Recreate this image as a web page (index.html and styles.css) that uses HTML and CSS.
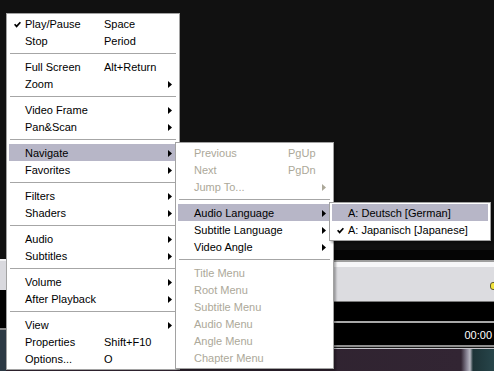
FILE: index.html
```html
<!DOCTYPE html>
<html>
<head>
<meta charset="utf-8">
<link rel="stylesheet" href="styles.css">
</head>
<body>
<div class="desk">
  <div class="lcol">
    <div class="l-dark"></div>
    <div class="l-white"></div>
    <div class="l-gray"></div>
    <div class="l-black"></div>
    <div class="l-line"></div>
    <div class="l-img"></div>
  </div>
  <div class="rcol">
    <div class="r-dark"></div>
    <div class="r-black"></div>
    <div class="r-line"></div>
    <div class="r-white"></div>
    <div class="r-toolbar"><span class="ydot"></span></div>
    <div class="r-line2"></div>
    <div class="r-seek"></div>
    <div class="r-line3"></div>
    <div class="r-status"><span class="time">00:00</span></div>
    <div class="r-line4"></div>
    <div class="r-line5"></div>
    <div class="r-line6"></div>
    <div class="r-img"></div>
  </div>
</div>

<div class="menu main">
  <div class="item"><span class="gut"><svg class="chk" width="7" height="7" viewBox="0 0 7 7"><path d="M0.6 3.2 L2.6 5.4 L6.4 1.2"/></svg></span><span class="lbl">Play/Pause</span><span class="key">Space</span></div>
  <div class="item"><span class="gut"></span><span class="lbl">Stop</span><span class="key">Period</span></div>
  <div class="sep"></div>
  <div class="item"><span class="gut"></span><span class="lbl">Full Screen</span><span class="key">Alt+Return</span></div>
  <div class="item"><span class="gut"></span><span class="lbl">Zoom</span><svg class="arr" width="4" height="7" viewBox="0 0 4 7"><path d="M0 0L4 3.5L0 7Z"/></svg></div>
  <div class="sep"></div>
  <div class="item"><span class="gut"></span><span class="lbl">Video Frame</span><svg class="arr" width="4" height="7" viewBox="0 0 4 7"><path d="M0 0L4 3.5L0 7Z"/></svg></div>
  <div class="item"><span class="gut"></span><span class="lbl">Pan&amp;Scan</span><svg class="arr" width="4" height="7" viewBox="0 0 4 7"><path d="M0 0L4 3.5L0 7Z"/></svg></div>
  <div class="sep"></div>
  <div class="item sel"><span class="gut"></span><span class="lbl">Navigate</span><svg class="arr" width="4" height="7" viewBox="0 0 4 7"><path d="M0 0L4 3.5L0 7Z"/></svg></div>
  <div class="item"><span class="gut"></span><span class="lbl">Favorites</span><svg class="arr" width="4" height="7" viewBox="0 0 4 7"><path d="M0 0L4 3.5L0 7Z"/></svg></div>
  <div class="sep"></div>
  <div class="item"><span class="gut"></span><span class="lbl">Filters</span><svg class="arr" width="4" height="7" viewBox="0 0 4 7"><path d="M0 0L4 3.5L0 7Z"/></svg></div>
  <div class="item"><span class="gut"></span><span class="lbl">Shaders</span><svg class="arr" width="4" height="7" viewBox="0 0 4 7"><path d="M0 0L4 3.5L0 7Z"/></svg></div>
  <div class="sep"></div>
  <div class="item"><span class="gut"></span><span class="lbl">Audio</span><svg class="arr" width="4" height="7" viewBox="0 0 4 7"><path d="M0 0L4 3.5L0 7Z"/></svg></div>
  <div class="item"><span class="gut"></span><span class="lbl">Subtitles</span><svg class="arr" width="4" height="7" viewBox="0 0 4 7"><path d="M0 0L4 3.5L0 7Z"/></svg></div>
  <div class="sep"></div>
  <div class="item"><span class="gut"></span><span class="lbl">Volume</span><svg class="arr" width="4" height="7" viewBox="0 0 4 7"><path d="M0 0L4 3.5L0 7Z"/></svg></div>
  <div class="item"><span class="gut"></span><span class="lbl">After Playback</span><svg class="arr" width="4" height="7" viewBox="0 0 4 7"><path d="M0 0L4 3.5L0 7Z"/></svg></div>
  <div class="sep"></div>
  <div class="item"><span class="gut"></span><span class="lbl">View</span><svg class="arr" width="4" height="7" viewBox="0 0 4 7"><path d="M0 0L4 3.5L0 7Z"/></svg></div>
  <div class="item"><span class="gut"></span><span class="lbl">Properties</span><span class="key">Shift+F10</span></div>
  <div class="item"><span class="gut"></span><span class="lbl">Options...</span><span class="key">O</span></div>
</div>

<div class="menu sub">
  <div class="item dis"><span class="gut"></span><span class="lbl">Previous</span><span class="key">PgUp</span></div>
  <div class="item dis"><span class="gut"></span><span class="lbl">Next</span><span class="key">PgDn</span></div>
  <div class="item dis"><span class="gut"></span><span class="lbl">Jump To...</span><svg class="arr" width="4" height="7" viewBox="0 0 4 7"><path d="M0 0L4 3.5L0 7Z"/></svg></div>
  <div class="sep"></div>
  <div class="item sel"><span class="gut"></span><span class="lbl">Audio Language</span><svg class="arr" width="4" height="7" viewBox="0 0 4 7"><path d="M0 0L4 3.5L0 7Z"/></svg></div>
  <div class="item"><span class="gut"></span><span class="lbl">Subtitle Language</span><svg class="arr" width="4" height="7" viewBox="0 0 4 7"><path d="M0 0L4 3.5L0 7Z"/></svg></div>
  <div class="item"><span class="gut"></span><span class="lbl">Video Angle</span><svg class="arr" width="4" height="7" viewBox="0 0 4 7"><path d="M0 0L4 3.5L0 7Z"/></svg></div>
  <div class="sep"></div>
  <div class="item dis"><span class="gut"></span><span class="lbl">Title Menu</span></div>
  <div class="item dis"><span class="gut"></span><span class="lbl">Root Menu</span></div>
  <div class="item dis"><span class="gut"></span><span class="lbl">Subtitle Menu</span></div>
  <div class="item dis"><span class="gut"></span><span class="lbl">Audio Menu</span></div>
  <div class="item dis"><span class="gut"></span><span class="lbl">Angle Menu</span></div>
  <div class="item dis"><span class="gut"></span><span class="lbl">Chapter Menu</span></div>
</div>

<div class="menu subsub">
  <div class="item sel"><span class="gut"></span><span class="lbl">A: Deutsch [German]</span></div>
  <div class="item"><span class="gut"><svg class="chk" width="7" height="7" viewBox="0 0 7 7"><path d="M0.6 3.2 L2.6 5.4 L6.4 1.2"/></svg></span><span class="lbl">A: Japanisch [Japanese]</span></div>
</div>
</body>
</html>
```
FILE: styles.css
```css
html, body {
  margin: 0;
  padding: 0;
  width: 494px;
  height: 371px;
  overflow: hidden;
  background: #111111;
  font-family: "Liberation Sans", Arial, sans-serif;
}

.desk {
  display: flex;
  width: 494px;
  height: 371px;
}

.lcol {
  width: 6px;
  display: flex;
  flex-direction: column;
}
.l-dark { height: 259px; background: #111111; }
.l-white { height: 2px; background: #f2f2f4; }
.l-gray { height: 29px; background: #d9d9de; }
.l-black { height: 38px; background: #020202; }
.l-line { height: 2px; background: #8a8a8a; }
.l-img { flex: 1; background: #2c3944; }

.rcol {
  flex: 1;
  display: flex;
  flex-direction: column;
}
.r-dark { height: 250px; background: #111111; }
.r-black { height: 10px; background: #050505; }
.r-line { height: 2px; background: #9e9e9e; }
.r-white { height: 5px; background: #f6f6f8; }
.r-toolbar {
  height: 34px;
  background: #dcdce0;
  display: flex;
  justify-content: flex-end;
  align-items: flex-start;
  padding-top: 15px;
  box-sizing: border-box;
  overflow: hidden;
}
.ydot {
  width: 7px;
  height: 6px;
  border-radius: 3px;
  background: #f2e33a;
  border: 1px solid #5e5a30;
  margin-right: -5px;
}
.r-line2 { height: 1px; background: #7a7a7a; }
.r-seek { height: 19px; background: #000000; }
.r-line3 { height: 2px; background: #a8a8a8; }
.r-status {
  height: 22px;
  background: #000000;
  display: flex;
  justify-content: flex-end;
  align-items: center;
}
.time {
  color: #ffffff;
  font-size: 11px;
  line-height: 22px;
  padding-right: 2px;
  padding-top: 1px;
}
.r-line4 { height: 2px; background: #8e8e8e; }
.r-line5 { height: 1px; background: #1a1a1a; }
.r-line6 { height: 1px; background: #c6c6cc; }
.r-img {
  flex: 1;
  background: linear-gradient(to right, #2b202b 0, #322533 455px, #8c8898 461px, #b8b8c2 464px, #1d3337 467px, #27454a 488px);
}

/* menus */
.menu {
  position: absolute;
  background: #ffffff;
  border: 1px solid #a2a2a2;
  padding: 1px 2px 2px 2px;
  box-sizing: border-box;
  font-size: 11px;
  color: #000000;
}
.main { left: 6px; top: 13px; width: 174px; }
.sub {
  left: 175px;
  top: 142px;
  width: 159px;
  box-shadow: 2px 2px 2px rgba(0, 0, 0, 0.3);
}
.subsub {
  left: 329px;
  top: 202px;
  width: 162px;
  box-shadow: 2px 2px 2px rgba(0, 0, 0, 0.3);
}

.item {
  display: flex;
  align-items: center;
  height: 16px;
  line-height: 16px;
  padding-top: 1px;
  white-space: nowrap;
}
.item.sel { background: #b7b6c7; }
.item.dis { color: #aca899; }

.gut {
  width: 16px;
  height: 16px;
  flex: none;
  display: flex;
  align-items: center;
  justify-content: center;
}
.chk path {
  fill: none;
  stroke: #000000;
  stroke-width: 1.7;
}

.main .lbl { width: 79px; flex: none; }
.sub .lbl { width: 94px; flex: none; }
.subsub .lbl { flex: none; }

.key { flex: 1; }

.arr {
  margin-left: auto;
  margin-right: 5px;
  flex: none;
}
.arr path { fill: #000000; }
.dis .arr path { fill: #aca899; }

.sep {
  height: 1px;
  margin: 4px 1px;
  background: #a6a6a6;
}
```
